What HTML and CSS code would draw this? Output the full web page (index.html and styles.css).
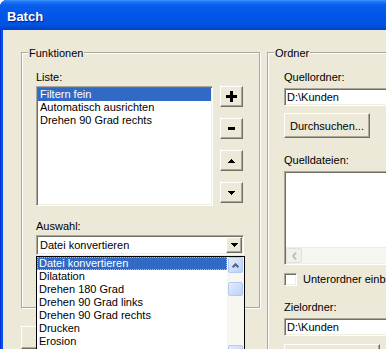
FILE: index.html
```html
<!DOCTYPE html>
<html lang="de">

<head>
    <meta charset="UTF-8">
    <title>Batch</title>
    <link rel="stylesheet" href="styles.css">
</head>

<body>
    <div class="fenster">
        <div class="titel">Batch</div>

        <div class="inhalt">
            <div class="links">
                <div class="gruppe funktionen">
                    <span class="gruppe-titel">Funktionen</span>
                    <p class="label">Liste:</p>
                    <div class="liste-zeile">
                        <ul class="liste versenkt">
                            <li class="valgt">Filtern fein</li>
                            <li>Automatisch ausrichten</li>
                            <li>Drehen 90 Grad rechts</li>
                        </ul>
                        <div class="knap-spalte">
                            <button class="knap">
                                <svg width="11" height="11" viewBox="0 0 11 11"><path d="M4 0h3v4h4v3H7v4H4V7H0V4h4z" fill="#000"/></svg>
                            </button>
                            <button class="knap">
                                <svg width="7" height="3" viewBox="0 0 7 3"><rect width="7" height="3" fill="#000"/></svg>
                            </button>
                            <button class="knap">
                                <svg width="7" height="4" viewBox="0 0 7 4"><path d="M3 0h1v1h1v1h1v1h1v1H0V3h1V2h1V1h1z" fill="#000"/></svg>
                            </button>
                            <button class="knap">
                                <svg width="7" height="4" viewBox="0 0 7 4"><path d="M0 0h7v1H6v1H5v1H4v1H3V3H2V2H1V1H0z" fill="#000"/></svg>
                            </button>
                        </div>
                    </div>
                    <p class="label auswahl-label">Auswahl:</p>
                    <div class="combo versenkt">
                        <span class="combo-text">Datei konvertieren</span>
                        <span class="knap combo-pil">
                            <svg width="7" height="4" viewBox="0 0 7 4"><path d="M0 0h7v1H6v1H5v1H4v1H3V3H2V2H1V1H0z" fill="#000"/></svg>
                        </span>
                    </div>
                </div>
                <button class="knap unten"></button>
            </div>

            <div class="gruppe ordner">
                <span class="gruppe-titel">Ordner</span>
                <p class="label">Quellordner:</p>
                <div class="tekstfelt versenkt">D:\Kunden</div>
                <button class="knap durchsuchen">Durchsuchen...</button>
                <p class="label quelldateien-label">Quelldateien:</p>
                <div class="dateiliste versenkt">
                    <div class="hscroll">
                        <span class="hscroll-knap">
                            <svg width="5" height="8" viewBox="0 0 5 8"><polyline points="4,0.5 1,4 4,7.5" fill="none" stroke="#C3C1B4" stroke-width="2"/></svg>
                        </span>
                    </div>
                </div>
                <label class="check-zeile">
                    <span class="check versenkt"></span>
                    <span>Unterordner einbeziehen</span>
                </label>
                <p class="label zielordner-label">Zielordner:</p>
                <div class="tekstfelt versenkt">D:\Kunden</div>
                <button class="knap ordner-unten"></button>
            </div>
        </div>

        <!-- aufgeklappte Auswahl-Liste -->
        <div class="dropdown">
            <ul class="dd-liste">
                <li class="valgt fokus">Datei konvertieren</li>
                <li>Dilatation</li>
                <li>Drehen 180 Grad</li>
                <li>Drehen 90 Grad links</li>
                <li>Drehen 90 Grad rechts</li>
                <li>Drucken</li>
                <li>Erosion</li>
                <li>Farben reduzieren</li>
            </ul>
            <div class="vscroll">
                <span class="sb-knap">
                    <svg width="7" height="5" viewBox="0 0 7 5"><polyline points="0.7,4.3 3.5,1.3 6.3,4.3" fill="none" stroke="#4D6185" stroke-width="2"/></svg>
                </span>
                <span class="sb-knap daumen"></span>
                <span class="sb-leer"></span>
                <span class="sb-knap">
                    <svg width="7" height="5" viewBox="0 0 7 5"><polyline points="0.7,0.7 3.5,3.7 6.3,0.7" fill="none" stroke="#4D6185" stroke-width="2"/></svg>
                </span>
            </div>
        </div>
    </div>
</body>

</html>
```

FILE: styles.css
```css
* {
    box-sizing: border-box;
    margin: 0;
    padding: 0;
}

body {
    background-color: #fff;
    font-family: "Liberation Sans", Arial, sans-serif;
    font-size: 11px;
    color: #000;
}

.fenster {
    position: relative;
    width: 386px;
    height: 349px;
    overflow: hidden;
    background: #0055E5;
    border-radius: 7px 0 0 0;
    box-shadow: inset 1px 0 0 #0831D9;
}

.titel {
    height: 30px;
    padding: 9px 0 0 7px;
    font: bold 13px/15px "Liberation Sans", Arial, sans-serif;
    color: #fff;
    text-shadow: 1px 1px 0 #0A1E8C;
    background: linear-gradient(#3D95FF 0, #1E74F5 2px, #0A5EEC 5px, #0056E8 50%, #0052E0 85%, #0041C8 100%);
    border-radius: 7px 0 0 0;
}

.inhalt {
    display: flex;
    gap: 7px;
    height: 319px;
    margin-left: 3px;
    padding: 22px 0 0 18px;
    background: #ECE9D8;
}

/* gruppen-rahmen (etched) */
.gruppe {
    position: relative;
    border: 1px solid #ACA899;
    box-shadow: 1px 1px 0 #fff, inset 1px 1px 0 #fff;
    flex-shrink: 0;
}

.gruppe-titel {
    position: absolute;
    top: -6px;
    left: 6px;
    padding: 0 1px;
    line-height: 13px;
    background: #ECE9D8;
}

.label {
    line-height: 13px;
}

.links {
    display: flex;
    flex-direction: column;
    align-items: flex-start;
    gap: 18px;
}

.funktionen {
    width: 239px;
    height: 256px;
    padding: 18px 0 0 14px;
}

.versenkt {
    background: #fff;
    border: 1px solid;
    border-color: #ACA899 #fff #fff #ACA899;
    box-shadow: inset 1px 1px 0 #716F64, inset -1px -1px 0 #F1EFE2;
    padding: 1px;
}

.liste-zeile {
    display: flex;
    gap: 7px;
    margin-top: 2px;
}

.liste {
    width: 177px;
    height: 120px;
    list-style: none;
}

.liste li,
.dd-liste li {
    height: 13px;
    line-height: 13px;
    padding-left: 2px;
    white-space: nowrap;
}

.valgt {
    background: #316AC5;
    color: #fff;
}

.knap-spalte {
    display: flex;
    flex-direction: column;
    gap: 11px;
}

.knap {
    display: flex;
    align-items: center;
    justify-content: center;
    width: 23px;
    height: 21px;
    font: inherit;
    color: #000;
    background: #ECE9D8;
    border: 1px solid;
    border-color: #fff #716F64 #716F64 #fff;
    box-shadow: inset -1px -1px 0 #ACA899;
    cursor: pointer;
}

.auswahl-label {
    margin-top: 14px;
}

.combo {
    display: flex;
    width: 208px;
    height: 20px;
    margin-top: 2px;
}

.combo-text {
    flex: 1;
    line-height: 16px;
    padding-left: 2px;
}

.combo-pil {
    width: 16px;
    height: 16px;
}

.unten {
    width: 80px;
    height: 24px;
}

.ordner {
    width: 140px;
    height: 330px;
    padding: 18px 0 0 16px;
}

.tekstfelt {
    width: 110px;
    height: 18px;
    margin-top: 4px;
    padding-left: 2px;
    line-height: 14px;
    white-space: nowrap;
}

.durchsuchen {
    width: 86px;
    height: 25px;
    margin-top: 7px;
}

.quelldateien-label {
    margin-top: 16px;
}

.dateiliste {
    display: flex;
    flex-direction: column;
    justify-content: flex-end;
    width: 110px;
    height: 94px;
    margin-top: 4px;
}

.hscroll {
    height: 16px;
    background: #F6F5F0;
    border-top: 1px solid #EEEDE5;
}

.hscroll-knap {
    display: flex;
    align-items: center;
    justify-content: center;
    width: 16px;
    height: 15px;
    background: #F1F0EA;
    border: 1px solid #E3E1D7;
    border-radius: 2px;
}

.check-zeile {
    display: flex;
    align-items: center;
    gap: 6px;
    margin-top: 8px;
    line-height: 13px;
    white-space: nowrap;
}

.check {
    width: 13px;
    height: 13px;
    flex-shrink: 0;
}

.zielordner-label {
    margin-top: 15px;
}

.ordner-unten {
    width: 96px;
    height: 24px;
    margin-top: 8px;
}

/* aufgeklappte liste */
.dropdown {
    position: absolute;
    left: 36px;
    top: 256px;
    display: flex;
    width: 209px;
    height: 106px;
    background: #fff;
    border: 1px solid #000;
}

.dd-liste {
    flex: 1;
    list-style: none;
}

.fokus {
    outline: 1px dotted #E2B768;
    outline-offset: -1px;
}

.vscroll {
    display: flex;
    flex-direction: column;
    width: 17px;
    padding-left: 1px;
    background: #F7F6F1;
}

.sb-knap {
    display: flex;
    align-items: center;
    justify-content: center;
    width: 15px;
    height: 16px;
    flex-shrink: 0;
    background: linear-gradient(135deg, #E3ECFE, #BDD0FA);
    border: 1px solid #B4C8F6;
    border-radius: 2px;
}

.daumen {
    height: 14px;
    margin-top: 9px;
}

.sb-leer {
    flex: 1;
}
```
